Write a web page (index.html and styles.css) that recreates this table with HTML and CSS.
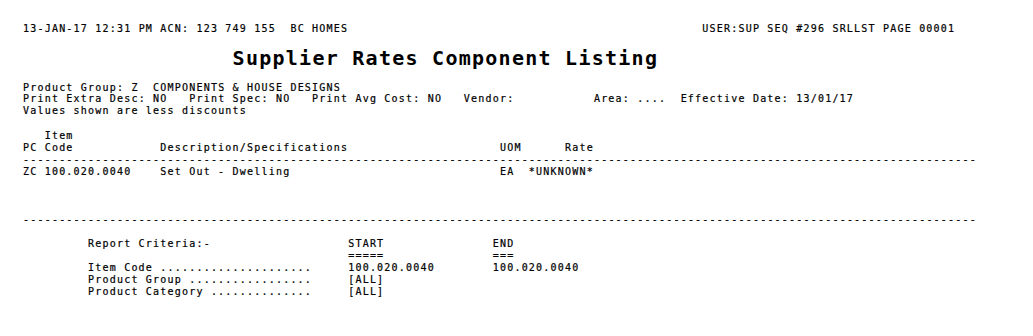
FILE: index.html
```html
<!DOCTYPE html>
<html lang="en">
<head>
<meta charset="utf-8">
<title>Supplier Rates Component Listing</title>
<link rel="stylesheet" href="styles.css">
</head>
<body>
<div class="report">
  <div class="row">
    <span class="col w94">13-JAN-17 12:31 PM ACN: 123 749 155  BC HOMES</span>
    <span class="col">USER:SUP SEQ #296 SRLLST PAGE 00001</span>
  </div>

  <h1 class="title">Supplier Rates Component Listing</h1>

  <div class="params">
    <div class="row">Product Group: Z  COMPONENTS &amp; HOUSE DESIGNS</div>
    <div class="row">
      <span class="col w23">Print Extra Desc: NO</span>
      <span class="col w17">Print Spec: NO</span>
      <span class="col w21">Print Avg Cost: NO</span>
      <span class="col w18">Vendor:</span>
      <span class="col">Area: ....  Effective Date: 13/01/17</span>
    </div>
    <div class="row">Values shown are less discounts</div>
  </div>

  <div class="listing">
    <div class="grid head">
      <span></span><span>Item</span><span></span><span></span><span></span><span></span>
      <span>PC</span><span>Code</span><span>Description/Specifications</span><span>UOM</span><span></span><span>Rate</span>
    </div>
    <div class="dashes">------------------------------------------------------------------------------------------------------------------------------------</div>
    <div class="grid line">
      <span>ZC</span><span>100.020.0040</span><span>Set Out - Dwelling</span><span>EA</span><span class="span2">*UNKNOWN*</span>
    </div>
  </div>

  <div class="dashes end">------------------------------------------------------------------------------------------------------------------------------------</div>

  <div class="criteria">
    <span>Report Criteria:-</span><span>START</span><span>END</span>
    <span></span><span>=====</span><span>===</span>
    <span>Item Code .....................</span><span>100.020.0040</span><span>100.020.0040</span>
    <span>Product Group .................</span><span>[ALL]</span><span></span>
    <span>Product Category ..............</span><span>[ALL]</span><span></span>
  </div>
</div>
</body>
</html>
```

FILE: styles.css
```css
:root {
  --c: 7.227px;
  --lh: 11.7px;
}

html, body {
  margin: 0;
  background: #ffffff;
  color: #000000;
}

.report {
  padding: 23px 0 0 23px;
  font-family: "DejaVu Sans Mono", "Liberation Mono", monospace;
  font-size: 10px;
  letter-spacing: 1.2065px;
  line-height: var(--lh);
  -webkit-text-stroke: 0.2px #000;
}

.row {
  display: flex;
  white-space: pre;
}

.col {
  flex: none;
  white-space: pre;
}

.w94 { width: calc(var(--c) * 94); }
.w23 { width: calc(var(--c) * 23); }
.w17 { width: calc(var(--c) * 17); }
.w21 { width: calc(var(--c) * 21); }
.w18 { width: calc(var(--c) * 18); }

.title {
  margin: 11.1px 0 0 calc(var(--c) * 29);
  font-size: 20px;
  font-weight: bold;
  letter-spacing: 1.26px;
  line-height: 24px;
  white-space: pre;
  -webkit-text-stroke: 0;
}

.params {
  margin-top: 11.9px;
}

.listing {
  margin-top: 13.6px;
}

.grid {
  display: grid;
  grid-template-columns:
    calc(var(--c) * 3)
    calc(var(--c) * 16)
    calc(var(--c) * 47)
    calc(var(--c) * 4)
    calc(var(--c) * 5)
    auto;
}

.grid.line {
  margin-top: 2px;
}

.grid > span {
  white-space: pre;
  min-height: var(--lh);
}

.span2 {
  grid-column: span 2;
}

.dashes {
  margin-top: 2px;
  line-height: 8px;
  white-space: pre;
}

.dashes.end {
  margin-top: 38.3px;
}

.criteria {
  margin: 14.1px 0 0 calc(var(--c) * 9);
  display: grid;
  grid-template-columns: calc(var(--c) * 36) calc(var(--c) * 20) auto;
  line-height: 12px;
}

.criteria > span {
  white-space: pre;
  min-height: 12px;
}
```
